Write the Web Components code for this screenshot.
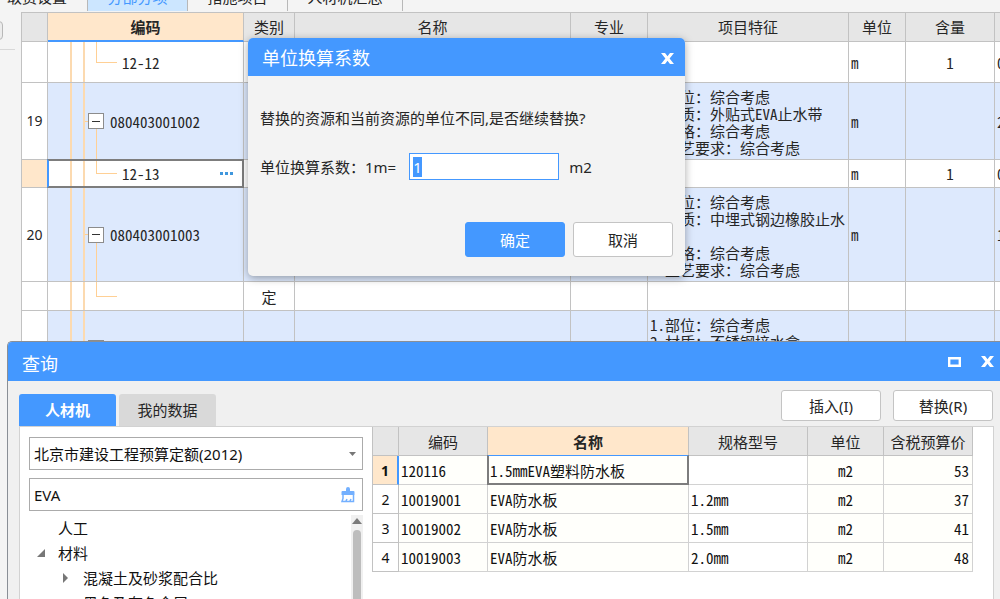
<!DOCTYPE html>
<html lang="zh-CN">
<head>
<meta charset="utf-8">
<meta name="viewport" content="width=device-width, initial-scale=1">
<title>分部分项</title>
<style>
  html, body { height: 100%; }
  body {
    margin: 0;
    overflow: hidden;
    background: #f4f4f4;
    color: #262626;
    font: 15px/20px "Noto Sans", "Noto Sans CJK SC", sans-serif;
    --blue: #4498ff;
    --peach: #ffe7cb;
    --line: #c2c2c2;
    --mono: "Noto Sans Mono CJK SC", "Liberation Mono", "Noto Sans CJK SC", monospace;
  }
</style>
</head>
<body>
<app-shell>
  <section-tabs slot="tabs"></section-tabs>
  <side-rail slot="rail"></side-rail>
  <cost-grid slot="main"></cost-grid>
  <query-window slot="overlay" heading="查询">
    <category-panel slot="side"></category-panel>
    <material-table slot="result"></material-table>
  </query-window>
  <unit-dialog slot="overlay" heading="单位换算系数">替换的资源和当前资源的单位不同,是否继续替换?</unit-dialog>
</app-shell>

<script>
class Base extends HTMLElement {
  constructor() {
    super();
    const t = document.createElement('template');
    t.innerHTML = '<style>*{box-sizing:border-box}button,input,select{font:inherit;color:inherit;margin:0}button{padding:0;cursor:pointer}</style>' + this.render();
    this.attachShadow({ mode: 'open' }).append(t.content.cloneNode(true));
  }
}

const closeIcon = '<svg width="13" height="11" viewBox="0 0 13 11" aria-hidden="true"><path d="M0 0h4l2.500 3.300L9 0h4L8.600 5.500 13 11H9L6.500 7.700 4 11H0l4.400-5.500z" fill="#fff"/></svg>';

customElements.define('app-shell', class extends Base {
  render() {
    return `<style>
      :host { display: flex; flex-direction: column; height: 100%; position: relative; overflow: hidden; }
      .work { display: flex; flex: 1; min-height: 0; }
      .main { flex: 1; min-width: 0; overflow: hidden; }
    </style>
    <slot name="tabs"></slot>
    <div class="work"><slot name="rail"></slot><div class="main"><slot name="main"></slot></div></div>
    <slot name="overlay"></slot>`;
  }
});

customElements.define('section-tabs', class extends Base {
  render() {
    const tabs = [['取费设置', 88], ['分部分项', 100, 1], ['措施项目', 100], ['人材机汇总', 115]];
    return `<style>
      :host { display: flex; align-items: flex-end; height: 12px; overflow: hidden; padding-bottom: 1px; box-sizing: border-box; }
      button { flex: none; height: 28px; border: 0; border-right: 1px solid #b8b8b8; background: #f4f4f4; }
      button:first-of-type { text-align: left; padding-left: 7px; }
      .on { background: #cce6ff; color: var(--blue); }
    </style>` + tabs.map(([t, w, on]) =>
      `<button type="button" style="width:${w}px"${on ? ' class="on"' : ''}>${t}</button>`).join('');
  }
});

customElements.define('side-rail', class extends Base {
  render() {
    return `<style>
      :host { display: block; flex: none; width: 21px; overflow: hidden; }
      .grip { display: block; width: 18px; height: 19px; margin: 9px 0 0 -15px; border: 1px solid #b8b8b8; border-radius: 4px; background: #ececec; }
      hr { border: 0; border-top: 1px solid #d8d8d8; margin: 9px 6px 0 0; }
    </style><button class="grip" type="button" aria-label="展开"></button><hr>`;
  }
});

const rows = [
  { h: 41, kind: 'leaf', code: '12-12', unit: 'm', qty: '1', last: '0' },
  { h: 77, kind: 'parent', no: '19', code: '080403001002', unit: 'm', last: '2',
    spec: ['1.部位：综合考虑', '2.材质：外贴式EVA止水带', '3.规格：综合考虑', '4.工艺要求：综合考虑'] },
  { h: 28, kind: 'leaf', code: '12-13', unit: 'm', qty: '1', last: '0', active: true },
  { h: 94, kind: 'parent', no: '20', code: '080403001003', unit: 'm', last: '1',
    spec: ['1.部位：综合考虑', '2.材质：中埋式钢边橡胶止水带', '3.规格：综合考虑', '4.工艺要求：综合考虑'] },
  { h: 29, kind: 'leaf', code: '', type: '定' },
  { h: 75, kind: 'parent', code: '', spec: ['1.部位：综合考虑', '2.材质：不锈钢接水盒'] }
];

customElements.define('cost-grid', class extends Base {
  render() {
    const heads = ['', '编码', '类别', '名称', '专业', '项目特征', '单位', '含量', ''];
    const widths = [27, 196, 51, 0, 77, 201, 57, 89, 65];
    return `<style>
      :host { display: block; }
      table { width: calc(100% + 60px); table-layout: fixed; border-collapse: separate; border-spacing: 0; border-top: 1px solid var(--line); }
      th, td { border: 0 solid var(--line); border-width: 0 1px 1px 0; padding: 0 2px; text-align: center; overflow: hidden; }
      th:first-child, td:first-child { border-left-width: 1px; padding: 0; }
      th { height: 29px; font-weight: 400; background: #e6e6e6; }
      th.cur { background: var(--peach); font-weight: 700; border-bottom: 2px solid var(--blue); }
      td { background: #fff; font-family: var(--mono); line-height: 17px; }
      td.no { background: #fff; font: 14px/20px "Noto Sans", sans-serif; }
      tr.parent td:not(.no) { background-color: #dde9fd; }
      tr.active td.no { background: var(--peach); }
      td.l { text-align: left; }
      td.spec { text-align: left; vertical-align: top; padding-top: 5px; }
      td.code {
        --g: linear-gradient(#ffd095, #ffd095);
        --w: linear-gradient(#fcdab0, #fcdab0);
        text-align: left; position: relative; padding: 0;
      }
      td.code, tr.parent td.code { background-image: var(--w), var(--w), var(--g), var(--g); background-repeat: no-repeat; }
      .leaf td.code { padding-left: 74px; background-position: 22px 0, 35px 0, 48px 0, 48px 50%; background-size: 2px 100%, 2px 100%, 1px 50%, 21px 1px; }
      tr.parent td.code { padding-left: 40px; background-position: 22px 0, 35px 0, 48px 100%, 35px 50%; background-size: 2px 100%, 2px 100%, 1px 50%, 6px 1px; }
      .node { display: flex; align-items: center; gap: 6px; }
      .fold { flex: none; width: 16px; height: 16px; border: 1px solid #8c8c8c; background: #fff; display: grid; place-items: center; }
      .fold::before { content: ""; width: 8px; height: 1px; background: #333; }
      .active td.code { overflow: visible; }
      .active td.code::after { content: ""; position: absolute; inset: -1px; border: 2px solid #7d7d7d; border-left-color: var(--blue); pointer-events: none; }
      .active .node { justify-content: space-between; padding-right: 10px; }
      .more { display: flex; gap: 2px; width: 13px; height: 13px; align-items: center; border: 0; background: none; }
      .more i { width: 3px; height: 3px; flex: none; background: #3f97dd; }
    </style>
    <table><colgroup>${widths.map(w => w ? `<col style="width:${w}px">` : '<col>').join('')}</colgroup>
    <thead><tr>${heads.map(h => `<th${h === '编码' ? ' class="cur"' : ''}>${h}</th>`).join('')}</tr></thead>
    <tbody>${rows.map(r => `<tr class="${r.kind}${r.active ? ' active' : ''}" style="height:${r.h}px">
      <td class="no">${r.no || ''}</td>
      <td class="code"><div class="node">${r.kind === 'parent' ? '<button class="fold" type="button" aria-label="折叠"></button>' : ''}<span>${r.code}</span>${r.active ? '<button class="more" type="button" aria-label="更多"><i></i><i></i><i></i></button>' : ''}</div></td>
      <td>${r.type || ''}</td><td></td><td></td>
      <td class="spec">${(r.spec || []).map(s => `<div>${s}</div>`).join('')}</td>
      <td class="l">${r.unit || ''}</td><td>${r.qty || ''}</td><td class="l">${r.last || ''}</td></tr>`).join('')}</tbody></table>`;
  }
});

customElements.define('unit-dialog', class extends Base {
  render() {
    return `<style>
      :host { position: absolute; left: 248px; top: 38px; width: 437px; border-radius: 5px; background: #f3f3f3; box-shadow: 0 2px 9px rgba(0,0,0,.35); overflow: hidden; }
      header { display: flex; align-items: center; justify-content: space-between; height: 38px; padding: 2px 11px 0 14px; background: var(--blue); color: #fff; }
      h2 { margin: 0; font-size: 18px; line-height: 24px; font-weight: 400; }
      .x { border: 0; background: none; height: 16px; display: flex; align-items: center; }
      form { padding: 32px 12px 19px; }
      p { margin: 0 0 25px; }
      .row { display: flex; align-items: center; }
      .row input { width: 150px; height: 27px; margin: 0 10px 0 13px; padding: 0 3px; border: 1px solid var(--blue); outline: 0; background: #fff; }
      input::selection { background: var(--blue); color: #fff; }
      footer { display: flex; justify-content: flex-end; gap: 8px; margin-top: 42px; }
      footer button { width: 100px; height: 35px; border: 1px solid #c4c4c4; border-radius: 3px; background: #fff; }
      footer .ok { background: var(--blue); border-color: var(--blue); color: #fff; }
    </style>
    <header><h2></h2><button class="x" type="button" aria-label="关闭">${closeIcon}</button></header>
    <form><p><slot></slot></p>
      <div class="row"><label for="k">单位换算系数：1m=</label><input id="k" value="1"><span>m2</span></div>
      <footer><button class="ok" type="button">确定</button><button type="button">取消</button></footer>
    </form>`;
  }
  connectedCallback() {
    this.setAttribute('role', 'dialog');
    this.shadowRoot.querySelector('h2').textContent = this.getAttribute('heading');
    const input = this.shadowRoot.querySelector('input');
    input.focus();
    input.select();
  }
});

customElements.define('query-window', class extends Base {
  render() {
    return `<style>
      :host { position: absolute; left: 7px; right: 0; top: 341px; bottom: 0; display: flex; flex-direction: column; background: #f0f0f0; border: 0 solid #8a8f96; border-width: 1px 0 0 1px; border-top-left-radius: 5px; box-sizing: border-box; overflow: hidden; }
      header { flex: none; display: flex; align-items: center; gap: 20px; height: 39px; padding: 0 6px 0 14px; background: var(--blue); color: #fff; }
      h2 { flex: 1; margin: 0; padding-top: 4px; font-size: 18px; line-height: 24px; font-weight: 400; }
      header button { border: 0; background: none; display: flex; }
      .bar { flex: none; display: flex; align-items: flex-end; gap: 3px; height: 45px; padding: 0 7px 0 11px; }
      .tab { width: 97px; height: 32px; border: 0; border-radius: 3px 3px 0 0; background: #d9d9d9; }
      .tab.on { background: var(--blue); color: #fff; font-weight: 700; }
      .acts { flex: 1; display: flex; justify-content: flex-end; gap: 12px; padding-bottom: 5px; }
      .acts button { width: 100px; height: 31px; border: 1px solid #c4c4c4; border-radius: 3px; background: #fff; }
      .panel { flex: 1; min-height: 0; display: flex; margin: 0 6px 0 11px; padding-right: 20px; border: 1px solid #d2d2d2; border-bottom: 0; background: #fff; overflow: hidden; }
    </style>
    <header><h2></h2>
      <button type="button" aria-label="最大化"><svg width="13" height="10" viewBox="0 0 13 10" aria-hidden="true"><path d="M1.200 1.200h10.600v7.600H1.200z" fill="none" stroke="#fff" stroke-width="2.400"/></svg></button>
      <button type="button" aria-label="关闭">${closeIcon}</button></header>
    <div class="bar"><button class="tab on" type="button">人材机</button><button class="tab" type="button">我的数据</button>
      <div class="acts"><button type="button">插入(I)</button><button type="button">替换(R)</button></div></div>
    <div class="panel"><slot name="side"></slot><slot name="result"></slot></div>`;
  }
  connectedCallback() {
    this.shadowRoot.querySelector('h2').textContent = this.getAttribute('heading');
  }
});

customElements.define('category-panel', class extends Base {
  render() {
    return `<style>
      :host { flex: none; display: flex; flex-direction: column; width: 352px; padding: 10px 9px 0; box-sizing: border-box; color: #111; }
      .field { flex: none; position: relative; display: flex; height: 33px; }
      .field + .field { margin: 8px 0 4px; }
      select, input { width: 100%; height: 100%; border: 1px solid #ababab; border-radius: 0; background: #fff; padding: 0 30px 0 4px; appearance: none; outline: 0; }
      .field svg { position: absolute; top: 0; bottom: 0; right: 7px; margin: auto 0; pointer-events: none; }
      .scroll { flex: 1; min-height: 0; display: flex; overflow: hidden; }
      ul { flex: 1; list-style: none; margin: 0; padding: 0 0 0 8px; }
      li { display: flex; align-items: center; gap: 12px; height: 25px; white-space: nowrap; }
      li svg { flex: none; width: 9px; height: 10px; }
      li.sub { padding-left: 25px; }
      .bar { flex: none; width: 12px; background: #f0f0f0; display: flex; flex-direction: column; align-items: center; }
      .bar svg { flex: none; margin: 3px 0 6px; }
      .thumb { width: 8px; flex: 1; background: #bdbdbd; border-radius: 4px 4px 0 0; }
    </style>
    <div class="field"><select aria-label="定额库"><option>北京市建设工程预算定额(2012)</option></select>
      <svg width="7" height="4" viewBox="0 0 7 4" aria-hidden="true"><path d="M0 0h7L3.500 4z" fill="#777"/></svg></div>
    <div class="field"><input value="EVA" aria-label="搜索">
      <svg width="16" height="16" viewBox="0 0 16 16" fill="none" stroke="#73b0ff" aria-hidden="true"><path d="M6 4V2a2 2 0 0 1 4 0v2h3.500a1 1 0 0 1 1 1v3h-13V5a1 1 0 0 1 1-1z" fill="#73b0ff" stroke="none"/><path d="M3 8v3.500l-1 3h11.500V8M6 14l1-2M10 14l1-2" stroke-width="1.500"/></svg></div>
    <div class="scroll"><ul>
      <li><svg></svg>人工</li>
      <li><svg viewBox="0 0 9 10" aria-hidden="true"><path d="M8 1v8H0z" fill="#777"/></svg>材料</li>
      <li class="sub"><svg viewBox="0 0 9 10" aria-hidden="true"><path d="M1 0v10l5-5z" fill="#777"/></svg>混凝土及砂浆配合比</li>
      <li class="sub"><svg></svg>黑色及有色金属</li></ul>
      <div class="bar"><svg width="10" height="6" viewBox="0 0 10 6" aria-hidden="true"><path d="M0 6 5 0l5 6z" fill="#7a7a7a"/></svg><div class="thumb"></div></div></div>`;
  }
});

const materials = [
  ['120116', '1.5mmEVA塑料防水板', '', 'm2', '53'],
  ['10019001', 'EVA防水板', '1.2mm', 'm2', '37'],
  ['10019002', 'EVA防水板', '1.5mm', 'm2', '41'],
  ['10019003', 'EVA防水板', '2.0mm', 'm2', '48']
];

customElements.define('material-table', class extends Base {
  render() {
    const heads = ['', '编码', '名称', '规格型号', '单位', '含税预算价'];
    const widths = [27, 89, 0, 119, 76, 89];
    return `<style>
      :host { flex: 1; min-width: 0; color: #111; }
      table { width: 100%; table-layout: fixed; border-collapse: separate; border-spacing: 0; }
      th, td { height: 29px; padding: 0 2px; border: 0 solid var(--line); border-width: 0 1px 1px 0; text-align: left; white-space: nowrap; }
      th:first-child, td:first-child { border-left-width: 1px; }
      thead th { background: #e6e6e6; color: #262626; font-weight: 400; text-align: center; padding-top: 2px; }
      thead th.cur { background: var(--peach); font-weight: 700; }
      td { padding-top: 2px; border-color: #d2d2d2; background: #fffffb; font-family: var(--mono); }
      td:nth-child(4) { background: #fff; }
      td:nth-child(5) { text-align: center; }
      td:nth-child(6) { text-align: right; padding-right: 3px; }
      tbody th { background: #fff; font-weight: 400; font-size: 14px; text-align: center; padding: 2px 0 0; }
      tbody tr.on th { background: var(--peach); font-weight: 700; border-right: 2px solid var(--blue); }
      tr.on td:nth-child(3) { position: relative; }
      tr.on td:nth-child(3)::after { content: ""; position: absolute; inset: -1px; border: 2px solid #7d7d7d; border-top: 1px solid var(--blue); pointer-events: none; }
    </style>
    <table><colgroup>${widths.map(w => w ? `<col style="width:${w}px">` : '<col>').join('')}</colgroup>
    <thead><tr>${heads.map(h => `<th${h === '名称' ? ' class="cur"' : ''}>${h}</th>`).join('')}</tr></thead>
    <tbody>${materials.map((m, i) => `<tr${i ? '' : ' class="on"'}><th scope="row">${i + 1}</th>${m.map(c => `<td>${c}</td>`).join('')}</tr>`).join('')}</tbody></table>`;
  }
});
</script>
</body>
</html>
